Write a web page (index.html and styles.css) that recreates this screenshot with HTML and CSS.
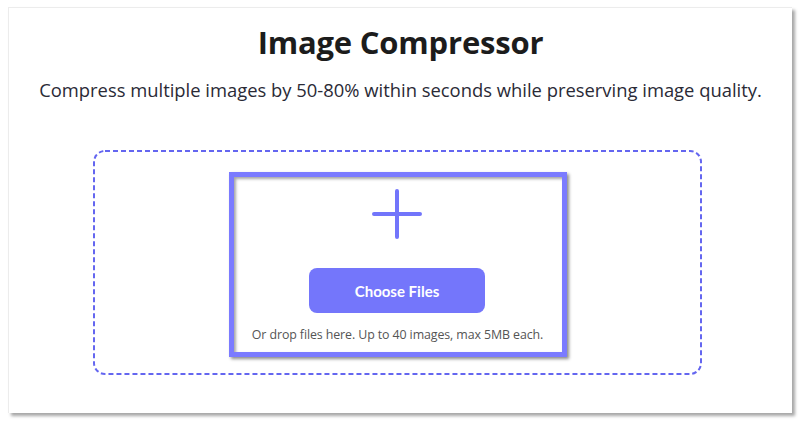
FILE: index.html
```html
<!DOCTYPE html>
<html>
<head>
<meta charset="utf-8">
<link rel="stylesheet" href="styles.css">
</head>
<body>
<div class="card">
  <h1 class="title">Image Compressor</h1>
  <p class="subtitle">Compress multiple images by 50-80% within seconds while preserving image quality.</p>
  <div class="dropzone">
    <div class="frame">
      <svg class="plus" width="52" height="52" viewBox="0 0 52 52">
        <path d="M26 3 V49 M3 26 H49" stroke="#7275fb" stroke-width="4" stroke-linecap="round" fill="none"/>
      </svg>
      <button class="choose">Choose Files</button>
      <p class="hint">Or drop files here. Up to 40 images, max 5MB each.</p>
    </div>
  </div>
</div>
</body>
</html>
```

FILE: styles.css
```css
html, body {
  margin: 0;
  padding: 0;
  background: #ffffff;
}
body {
  width: 800px;
  height: 422px;
  overflow: hidden;
  font-family: "Open Sans", "Noto Sans", sans-serif;
}
.card {
  box-sizing: border-box;
  margin: 7px 0 0 8px;
  width: 784px;
  height: 406px;
  background: #fff;
  border-top: 1px solid #ececec;
  border-left: 1px solid #ececec;
  box-shadow: 3px 3px 3px rgba(0,0,0,0.35);
  display: flex;
  flex-direction: column;
  align-items: center;
}
.title {
  margin: 14px 0 0;
  font-size: 31px;
  font-weight: 700;
  line-height: 40px;
  color: #1c1c1c;
  letter-spacing: -0.2px;
}
.subtitle {
  margin: 15px 0 0;
  font-size: 18.4px;
  line-height: 26px;
  color: #2a2a36;
}
.dropzone {
  box-sizing: border-box;
  margin: 47px 6px 0 0;
  width: 609px;
  height: 225px;
  border-radius: 12px;
  background-image: url("data:image/svg+xml,%3Csvg xmlns='http://www.w3.org/2000/svg' width='100%25' height='100%25'%3E%3Crect width='100%25' height='100%25' rx='12' ry='12' fill='none' stroke='%236466f0' stroke-width='4' stroke-dasharray='5%2C3'/%3E%3C/svg%3E");
  display: flex;
  justify-content: center;
  align-items: center;
  padding: 4px 0 0 0;
}
.frame {
  box-sizing: border-box;
  width: 338px;
  height: 185px;
  border: 5px solid #7b7bff;
  box-shadow: 2px 2px 3px rgba(0,0,0,0.45), inset 2px 2px 3px rgba(0,0,0,0.35);
  display: flex;
  flex-direction: column;
  align-items: center;
  padding-top: 11px;
}
.plus {
  display: block;
  margin-left: -2px;
}
.choose {
  margin-top: 28px;
  width: 176px;
  height: 45px;
  border: none;
  border-radius: 8px;
  background: #7476fb;
  color: #fff;
  font-family: "Lato", "Open Sans", sans-serif;
  font-size: 15px;
  font-weight: 700;
  margin-left: -1px;
}
.hint {
  margin: 13px 0 0;
  font-size: 12.4px;
  color: #555;
  line-height: 17px;
  letter-spacing: -0.1px;
}
```
